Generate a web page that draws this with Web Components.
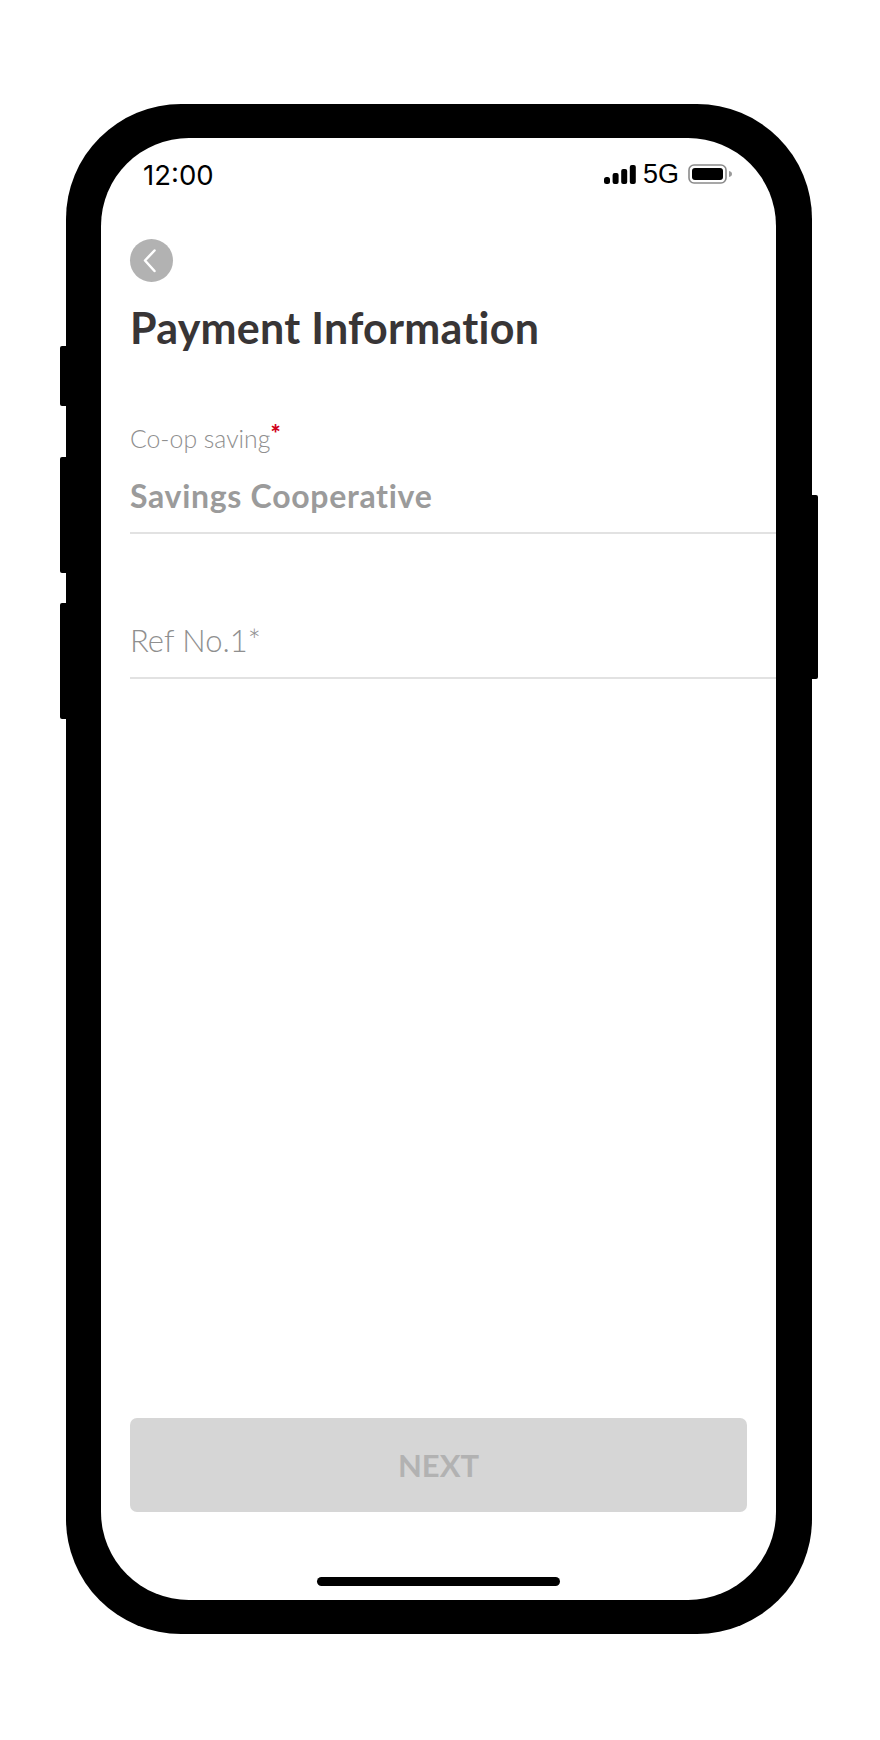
<!DOCTYPE html>
<html lang="en">
<head>
<meta charset="utf-8">
<title>Payment Information</title>
<style>
    html, body { margin: 0; background: #fff; }
</style>
</head>
<body>
<phone-frame>
    <status-bar time="12:00"></status-bar>
    <back-button></back-button>
    <page-title>Payment Information</page-title>
    <form-field label="Co-op saving" value="Savings Cooperative"></form-field>
    <form-field placeholder="Ref No.1*"></form-field>
    <next-button>NEXT</next-button>
    <home-indicator></home-indicator>
</phone-frame>

<script>
class PhoneFrame extends HTMLElement {
    constructor() {
        super()
        const shadow = this.attachShadow({ mode: "open" });
        shadow.innerHTML = `
        <style>
            :host {
                display: block;
                position: relative;
                box-sizing: border-box;
                width: 746px;
                height: 1530px;
                margin: 104px 0 0 66px;
                background: #000;
                border-radius: 115px;
                padding: 34px 36px 34px 35px;
            }
            .screen {
                display: flex;
                flex-direction: column;
                height: 100%;
                background: #fff;
                border-radius: 88px;
                overflow: hidden;
            }
            .side {
                position: absolute;
                background: #000;
            }
            .left { left: -6px; width: 6px; border-radius: 2px 0 0 2px; }
            .right { right: -6px; width: 6px; top: 391px; height: 184px; border-radius: 0 2px 2px 0; }
        </style>
        <div class="side left" style="top:242px;height:60px"></div>
        <div class="side left" style="top:353px;height:116px"></div>
        <div class="side left" style="top:499px;height:116px"></div>
        <div class="side right"></div>
        <div class="screen"><slot></slot></div>
        `;
    }
}

class StatusBar extends HTMLElement {
    constructor() {
        super()
        const shadow = this.attachShadow({ mode: "open" });
        shadow.innerHTML = `
        <style>
            :host {
                display: flex;
                align-items: center;
                justify-content: space-between;
                height: 72px;
                padding: 0 43px 0 42px;
                color: #000;
                font-family: Inter, "Liberation Sans", Arial, sans-serif;
                font-size: 27.500px;
            }
            .time { padding-top: 1px; }
            .right { display: flex; align-items: center; }
            .net { margin: 0 9px 0 7px; font-family: "Liberation Sans", Arial, sans-serif; font-size: 27px; }
            svg { display: block; }
        </style>
        <span class="time">${this.getAttribute("time")}</span>
        <div class="right">
            <svg width="32" height="19" viewBox="0 0 32 19">
                <rect x="0" y="12" width="6" height="7" rx="2.5"/>
                <rect x="8.6" y="8" width="6" height="11" rx="2"/>
                <rect x="17.2" y="4" width="6" height="15" rx="2"/>
                <rect x="25.8" y="0" width="6" height="19" rx="2"/>
            </svg>
            <span class="net">5G</span>
            <svg width="45" height="20" viewBox="0 0 45 20">
                <rect x="1" y="1" width="37" height="18" rx="5" fill="none" stroke="#8a8a8a" stroke-width="1.6"/>
                <rect x="4" y="4" width="31" height="12" rx="3" fill="#000"/>
                <path d="M41 7c2 .4 3 1.500 3 3s-1 2.600-3 3z" fill="#9a9a9a"/>
            </svg>
        </div>
        `;
    }
}

class BackButton extends HTMLElement {
    constructor() {
        super()
        const shadow = this.attachShadow({ mode: "open" });
        shadow.innerHTML = `
        <style>
            :host {
                display: flex;
                align-items: center;
                justify-content: center;
                width: 43px;
                height: 43px;
                margin: 29px 0 0 29px;
                border-radius: 50%;
                background: #b2b2b2;
            }
            svg { display: block; }
        </style>
        <svg width="43" height="43" viewBox="0 0 43 43">
            <path d="M24.500 11.500 L15 21.500 L24.500 32" fill="none" stroke="#fff" stroke-width="2.500" stroke-linecap="round" stroke-linejoin="round"/>
        </svg>
        `;
    }
}

class PageTitle extends HTMLElement {
    constructor() {
        super()
        const shadow = this.attachShadow({ mode: "open" });
        shadow.innerHTML = `
        <style>
            :host {
                display: block;
                margin: 19px 0 0 29px;
                color: #383536;
                font-family: Lato, "Liberation Sans", sans-serif;
                font-weight: 700;
                font-size: 43px;
                font-variant-ligatures: none;
                letter-spacing: .25px;
                line-height: 54px;
                white-space: nowrap;
            }
        </style>
        <slot></slot>
        `;
    }
}

class FormField extends HTMLElement {
    constructor() {
        super()
        const shadow = this.attachShadow({ mode: "open" });
        const label = this.getAttribute("label");
        const value = this.getAttribute("value");
        const placeholder = this.getAttribute("placeholder");
        shadow.innerHTML = `
        <style>
            :host {
                display: block;
                margin-left: 29px;
                border-bottom: 2px solid #e2e2e2;
                font-family: Lato, "Liberation Sans", sans-serif;
                font-variant-ligatures: none;
                color: #9b9b9b;
            }
            .label {
                font-weight: 300;
                font-size: 24.800px;
                line-height: 32px;
                color: #8f8f8f;
            }
            .star { color: #d0021b; font-weight: 900; font-size: 24px; vertical-align: 5px; line-height: 0; }
            .value {
                font-weight: 700;
                font-size: 32px;
                letter-spacing: .7px;
                line-height: 40px;
                margin-top: 21px;
                padding-bottom: 16px;
            }
            .placeholder {
                font-weight: 300;
                font-size: 31px;
                line-height: 42px;
                padding-bottom: 16px;
                color: #8f8f8f;
            }
        </style>
        ${label ? `<div class="label">${label}<span class="star">*</span></div>` : ""}
        ${value ? `<div class="value">${value}</div>` : ""}
        ${placeholder ? `<div class="placeholder">${placeholder}</div>` : ""}
        `;
    }
    connectedCallback() {
        this.style.marginTop = this.getAttribute("label") ? "68px" : "85px";
    }
}

class NextButton extends HTMLElement {
    constructor() {
        super()
        const shadow = this.attachShadow({ mode: "open" });
        shadow.innerHTML = `
        <style>
            :host {
                display: flex;
                align-items: center;
                justify-content: center;
                height: 94px;
                margin: auto 29px 0 29px;
                border-radius: 7px;
                background: #d6d6d6;
                color: #b2b2b2;
                font-family: Lato, "Liberation Sans", sans-serif;
                font-weight: 700;
                font-size: 31px;
            }
        </style>
        <slot></slot>
        `;
    }
}

class HomeIndicator extends HTMLElement {
    constructor() {
        super()
        const shadow = this.attachShadow({ mode: "open" });
        shadow.innerHTML = `
        <style>
            :host {
                display: block;
                width: 243px;
                height: 9px;
                margin: 65px auto 14px;
                border-radius: 5px;
                background: #000;
            }
        </style>
        `;
    }
}

customElements.define('phone-frame', PhoneFrame);
customElements.define('status-bar', StatusBar);
customElements.define('back-button', BackButton);
customElements.define('page-title', PageTitle);
customElements.define('form-field', FormField);
customElements.define('next-button', NextButton);
customElements.define('home-indicator', HomeIndicator);
</script>
</body>
</html>
